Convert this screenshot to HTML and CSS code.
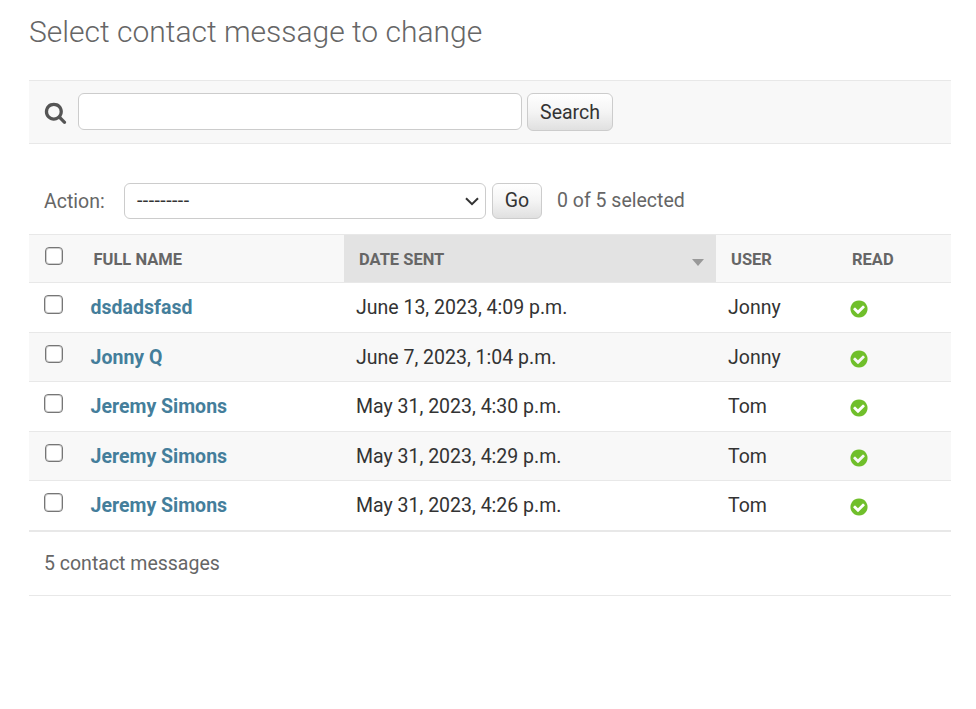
FILE: index.html
```
<!DOCTYPE html>
<html lang="en">
<head>
<meta charset="utf-8">
<title>Select contact message to change</title>
<link rel="stylesheet" href="styles.css">
</head>
<body>
<svg class="defs" width="0" height="0" aria-hidden="true">
  <symbol id="yes" viewBox="0 0 1792 1792"><path fill="#70bf2b" d="M1412 734q0-28-18-46l-91-90q-19-19-45-19t-45 19l-408 407-226-226q-19-19-45-19t-45 19l-91 90q-18 18-18 46 0 27 18 45l362 362q19 19 45 19 27 0 46-19l543-543q18-18 18-45zm252 162q0 209-103 385.500t-279.500 279.500-385.500 103-385.500-103-279.500-279.500-103-385.500 103-385.500 279.500-279.500 385.500-103 385.500 103 279.500 279.500 103 385.500z"/></symbol>
</svg>
<main>
  <h1>Select contact message to change</h1>
  <form class="toolbar">
    <svg class="search-icon" viewBox="0 0 1792 1792" aria-hidden="true"><path fill="#555" d="M1216 832q0-185-131.500-316.500t-316.500-131.500-316.500 131.500-131.500 316.500 131.500 316.500 316.500 131.500 316.500-131.500 131.500-316.500zm512 832q0 52-38 90t-90 38q-54 0-90-38l-343-342q-179 124-399 124-143 0-273.500-55.500t-225-150-150-225-55.500-273.500 55.500-273.500 150-225 225-150 273.500-55.500 273.500 55.500 225 150 150 225 55.500 273.500q0 220-124 399l343 343q37 37 37 90z"/></svg>
    <input class="search-field" type="text">
    <button class="button search-button" type="button">Search</button>
  </form>
  <div class="actions">
    <label for="action">Action:</label>
    <div class="select">
      <span id="action">---------</span>
      <svg viewBox="0 0 14 9" aria-hidden="true"><path d="M1 1.2 7 7.2 13 1.2" fill="none" stroke="#333" stroke-width="2"/></svg>
    </div>
    <button class="button go-button" type="button">Go</button>
    <span class="counter">0 of 5 selected</span>
  </div>
  <table>
    <colgroup><col class="c-check"><col class="c-name"><col class="c-date"><col class="c-user"><col></colgroup>
    <thead>
      <tr><th><span class="box"></span></th><th>Full name</th><th class="sorted"><div>Date sent<i class="arrow"></i></div></th><th>User</th><th>Read</th></tr>
    </thead>
    <tbody>
      <tr><td><span class="box"></span></td><th>dsdadsfasd</th><td>June 13, 2023, 4:09 p.m.</td><td>Jonny</td><td><svg class="yes"><use href="#yes"/></svg></td></tr>
      <tr><td><span class="box"></span></td><th>Jonny Q</th><td>June 7, 2023, 1:04 p.m.</td><td>Jonny</td><td><svg class="yes"><use href="#yes"/></svg></td></tr>
      <tr><td><span class="box"></span></td><th>Jeremy Simons</th><td>May 31, 2023, 4:30 p.m.</td><td>Tom</td><td><svg class="yes"><use href="#yes"/></svg></td></tr>
      <tr><td><span class="box"></span></td><th>Jeremy Simons</th><td>May 31, 2023, 4:29 p.m.</td><td>Tom</td><td><svg class="yes"><use href="#yes"/></svg></td></tr>
      <tr><td><span class="box"></span></td><th>Jeremy Simons</th><td>May 31, 2023, 4:26 p.m.</td><td>Tom</td><td><svg class="yes"><use href="#yes"/></svg></td></tr>
    </tbody>
  </table>
  <p class="paginator">5 contact messages</p>
</main>
</body>
</html>
```
FILE: styles.css
```
* { box-sizing: border-box; }
body {
  margin: 0;
  background: #fff;
  color: #333;
  font: 19.5px/24px Roboto, sans-serif;
}
.defs { position: absolute; }
main { width: 922px; margin-left: 29px; }
h1 {
  margin: 0;
  height: 80px;
  padding-top: 14px;
  font-size: 30px;
  line-height: 36px;
  font-weight: 300;
  color: #666;
}
.toolbar {
  display: flex;
  align-items: flex-start;
  height: 64px;
  padding: 12px 15px;
  background: #f8f8f8;
  border-top: 1px solid #e8e8e8;
  border-bottom: 1px solid #e8e8e8;
}
.search-icon { width: 23px; height: 23px; margin: 8px 11px 0 0; }
.search-field {
  width: 444px;
  height: 37px;
  margin: 0 5px 0 0;
  border: 1px solid #ccc;
  border-radius: 6px;
  background: #fff;
}
.button {
  padding: 0;
  border: 1px solid #ccc;
  border-radius: 6px;
  background: linear-gradient(#fff, #f4f4f4 50%, #e0e0e0);
  color: #333;
  font: inherit;
}
.search-button { width: 86px; height: 38px; padding-top: 2px; }
.actions {
  display: flex;
  height: 90px;
  padding: 39px 15px 0;
  color: #666;
}
.actions label { width: 80px; padding-top: 7px; }
.select {
  display: flex;
  align-items: center;
  justify-content: space-between;
  width: 362px;
  height: 36px;
  margin-right: 6px;
  padding: 0 6px 0 12px;
  border: 1px solid #ccc;
  border-radius: 6px;
  color: #333;
}
.select span { letter-spacing: 0.45px; }
.select svg { width: 14px; height: 9px; }
.go-button { width: 50px; height: 36px; }
.counter { margin-left: 15px; padding-top: 6px; }
table {
  width: 922px;
  table-layout: fixed;
  border-collapse: separate;
  border-spacing: 0;
}
.c-check { width: 50px; }
.c-name { width: 265px; }
.c-date { width: 372px; }
.c-user { width: 121px; }
th, td {
  height: 49px;
  padding: 0 12px;
  border-bottom: 1px solid #e8e8e8;
  text-align: left;
  vertical-align: middle;
}
thead th {
  padding: 2px 15px 0;
  background: #f8f8f8;
  border-top: 1px solid #e8e8e8;
  color: #666;
  font-size: 16.5px;
  font-weight: 700;
  text-transform: uppercase;
}
thead th:nth-child(2) { padding-left: 14.5px; }
thead .sorted { padding-right: 12px; background: #e3e3e3; }
.sorted div { display: flex; align-items: center; justify-content: space-between; }
.arrow {
  margin: 6px 0.5px 0 0;
  border: 6.5px solid transparent;
  border-top: 7px solid #999;
  border-bottom: 0;
}
tbody th { padding-left: 11.6px; color: #447e9b; font-weight: 700; }
tbody tr:nth-child(odd) > * { height: 50px; }
tbody tr:nth-child(even) { background: #f8f8f8; }
tbody tr:nth-child(even) > * { padding-top: 2px; }
tr > :first-child,
tbody tr:nth-child(n) > :first-child { padding: 12px 15px 0; vertical-align: top; }
tbody tr:nth-child(n) > :nth-child(5) { padding: 0 12px; }
.box {
  display: block;
  width: 19px;
  height: 19px;
  margin-left: 0;
  border: 1px solid #767676;
  border-radius: 4px;
  background: #fff;
  box-shadow: inset 0 0 0 1px rgba(118, 118, 118, 0.35);
}
thead .box,
tr:nth-child(even) .box { width: 18px; height: 18px; margin-left: 1px; }
.yes { display: block; width: 20px; height: 20px; margin-top: 3px; }
tr:nth-child(even) .yes { margin-top: 4px; }
.paginator {
  height: 65px;
  margin: 0;
  padding: 20px 15px 0;
  border-top: 1px solid #e8e8e8;
  border-bottom: 1px solid #e8e8e8;
  color: #666;
}
```
